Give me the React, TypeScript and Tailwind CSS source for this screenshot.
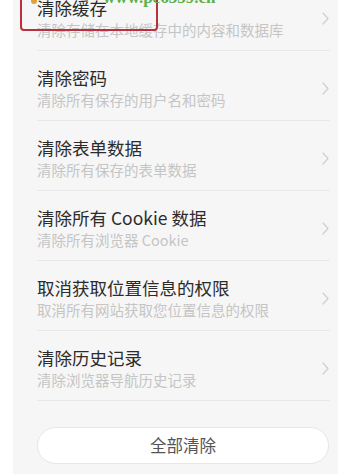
const items = [
  { title: "清除缓存", desc: "清除存储在本地缓存中的内容和数据库" },
  { title: "清除密码", desc: "清除所有保存的用户名和密码" },
  { title: "清除表单数据", desc: "清除所有保存的表单数据" },
  { title: "清除所有 Cookie 数据", desc: "清除所有浏览器 Cookie" },
  { title: "取消获取位置信息的权限", desc: "取消所有网站获取您位置信息的权限" },
  { title: "清除历史记录", desc: "清除浏览器导航历史记录" },
];

function Chevron() {
  return (
    <svg width="7" height="13" viewBox="0 0 7 13" fill="none" className="shrink-0">
      <path d="M1 1l5 5.5L1 12" stroke="#cfcfcf" strokeWidth="1.2" strokeLinecap="round" strokeLinejoin="round" />
    </svg>
  );
}

export default function App() {
  return (
    <div
      className="relative h-[474px] w-[338px] overflow-hidden bg-white"
      style={{ fontFamily: '"Noto Sans CJK SC", "Noto Sans", sans-serif' }}
    >
      <div className="ml-[13px] flex h-full flex-col bg-[#f6f6f6] pl-[24px] pr-[8px]">
        <div className="-mt-[19px] flex flex-col">
          {items.map((it) => (
            <div
              key={it.title}
              className="flex items-center border-b border-[#e9e9e9] pt-[16px] pb-[11px] pr-[1px]"
            >
              <div className="flex flex-1 flex-col gap-[2px]">
                <div className="text-[17.5px] leading-[22px] text-[#2b2b2b]">{it.title}</div>
                <div className="text-[14.5px] leading-[18px] text-[#c5c5c5]">{it.desc}</div>
              </div>
              <Chevron />
            </div>
          ))}
        </div>
        <button className="mt-[26px] flex h-[37px] w-[292px] items-center justify-center rounded-full border border-[#e6e6e6] bg-white text-[16.5px] text-[#555]">
          全部清除
        </button>
      </div>

      {/* annotation overlay */}
      <div className="absolute left-[20px] top-[-20px] h-[51px] w-[138px] rounded-[4px] border-2 border-[#b8313c]" />
      <div className="absolute left-[31px] top-[-6px] h-[10px] w-[6px] rounded-sm bg-[#e0a040]" />
      <div
        className="absolute left-[103px] top-[-15px] text-[17px] font-bold text-[#5bb04a]"
        style={{ fontFamily: '"Liberation Serif", serif' }}
      >
        www.pc6359.cn
      </div>
    </div>
  );
}
